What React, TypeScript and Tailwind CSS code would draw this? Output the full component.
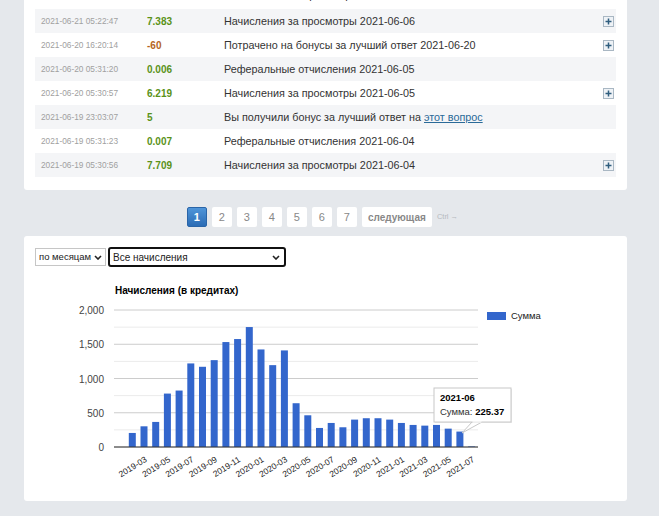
import React from "react";

type Row = {
    date: string;
    amount: string;
    text: React.ReactNode;
    plus?: boolean;
};

const rows: Row[] = [
    { date: "2021-06-21 05:22:47", amount: "7.383", text: "Начисления за просмотры 2021-06-06", plus: true },
    { date: "2021-06-20 16:20:14", amount: "-60", text: "Потрачено на бонусы за лучший ответ 2021-06-20", plus: true },
    { date: "2021-06-20 05:31:20", amount: "0.006", text: "Реферальные отчисления 2021-06-05" },
    { date: "2021-06-20 05:30:57", amount: "6.219", text: "Начисления за просмотры 2021-06-05", plus: true },
    {
        date: "2021-06-19 23:03:07",
        amount: "5",
        text: (
            <>
                Вы получили бонус за лучший ответ на{" "}
                <a href="#" className="text-[#2a6a98] underline">этот вопрос</a>
            </>
        ),
    },
    { date: "2021-06-19 05:31:23", amount: "0.007", text: "Реферальные отчисления 2021-06-04" },
    { date: "2021-06-19 05:30:56", amount: "7.709", text: "Начисления за просмотры 2021-06-04", plus: true },
];

const values = [
    205, 302, 366, 780, 824, 1220, 1171, 1268, 1532, 1576, 1751, 1424, 1195, 1410, 639,
    463, 278, 351, 288, 400, 420, 420, 400, 351, 322, 312, 322, 268, 225.37, 8,
];

const yOf = (v: number) => 176 - (v * 137) / 2000;
const barX = (i: number) => 93.8 + 11.7 * i;

const monthLabel = (i: number) => {
    const m = 1 + i; // 2019-02 is index 0
    const year = 2019 + Math.floor(m / 12);
    const month = (m % 12) + 1;
    return `${year}-${String(month).padStart(2, "0")}`;
};

const PlusIcon = () => (
    <svg width="11" height="11" viewBox="0 0 11 11">
        <rect x="0.5" y="0.5" width="10" height="10" fill="#eef2f6" stroke="#a9b7c3" />
        <path d="M5.5 2.5 V8.5 M2.5 5.5 H8.5" stroke="#2f5d7e" strokeWidth="1.5" />
    </svg>
);

const Chevron = () => (
    <svg width="8" height="5" viewBox="0 0 8 5">
        <path d="M1 1 L4 4 L7 1" fill="none" stroke="#222" strokeWidth="1.6" />
    </svg>
);

const Chart = () => {
    const grid = Array.from({ length: 9 }, (_, k) => k * 250);
    return (
        <svg width="581" height="222" className="block">
            <text x="80" y="23" className="text-[10px] font-bold" fill="#000">
                Начисления (в кредитах)
            </text>
            {grid.map((v, k) => (
                <line
                    key={v}
                    x1="79"
                    x2="443"
                    y1={yOf(v)}
                    y2={yOf(v)}
                    stroke={k % 2 === 0 ? "#cccccc" : "#ebebeb"}
                    strokeWidth="1"
                />
            ))}
            {[0, 500, 1000, 1500, 2000].map((v) => (
                <text key={v} x="69" y={yOf(v) + 4} textAnchor="end" className="text-[10px]" fill="#444">
                    {v.toLocaleString("en-US")}
                </text>
            ))}
            {values.map((v, i) => (
                <rect key={i} x={barX(i)} y={yOf(v)} width="7" height={176 - yOf(v)} fill="#3366cc" />
            ))}
            <line x1="79" x2="443" y1="176" y2="176" stroke="#333" strokeWidth="1" />
            {values.map((_, i) =>
                i % 2 === 1 ? (
                    <text
                        key={i}
                        transform={`translate(${barX(i) + 7}, 190) rotate(-32)`}
                        textAnchor="end"
                        className="text-[8.5px]"
                        fill="#222"
                    >
                        {monthLabel(i)}
                    </text>
                ) : null
            )}
            <rect x="452" y="41" width="19" height="8" fill="#3366cc" />
            <text x="476" y="48" className="text-[9.5px]" fill="#222">
                Сумма
            </text>
            <rect x="400" y="118" width="77" height="34" fill="#000" opacity="0.08" />
            <polygon points="437,151 447,151 427,162" fill="#fff" stroke="#c8c8c8" />
            <rect x="399" y="117" width="77" height="34" fill="#fff" stroke="#c8c8c8" />
            <line x1="437.5" x2="446.5" y1="151" y2="151" stroke="#fff" strokeWidth="1.2" />
            <text x="405" y="130" className="text-[9.5px] font-bold" fill="#000">
                2021-06
            </text>
            <text x="405" y="144" className="text-[9.5px]" fill="#333">
                Сумма: <tspan className="font-bold" fill="#000">225.37</tspan>
            </text>
        </svg>
    );
};

const App = () => {
    return (
        <div className="min-h-[516px] bg-[#e5e8ec] pb-4 font-['Liberation_Sans',Arial,sans-serif] overflow-hidden">
            <div className="ml-6 w-[603px] -mt-[31px] bg-white rounded-[3px] px-[11px] pt-[16px] pb-[13px]">
                <div className="flex items-center h-6 pb-[3px] text-[11px] text-[#333]">
                    <div className="w-[189px]"></div>
                    <div>Начисления за просмотры 2021-06-07</div>
                </div>
                {rows.map((row, index) => (
                    <div
                        key={index}
                        className={`flex items-center h-6 ${index % 2 === 0 ? "bg-[#f4f5f7]" : "bg-white"}`}
                    >
                        <div className="w-[112px] pl-[6px] text-[8.3px] text-[#a0a0a0] whitespace-nowrap">{row.date}</div>
                        <div
                            className={`w-[77px] text-[10px] font-bold ${row.amount.startsWith("-") ? "text-[#b5651d]" : "text-[#5a9218]"}`}
                        >
                            {row.amount}
                        </div>
                        <div className="flex-1 text-[10.8px] text-[#333]">{row.text}</div>
                        <div className="w-[11px] mr-[2px] flex">{row.plus && <PlusIcon />}</div>
                    </div>
                ))}
            </div>

            <div className="mt-[17px] mb-[9px] ml-6 w-[603px] flex items-center justify-center gap-[5px] pr-[6px]">
                <div className="w-5 h-5 flex items-center justify-center rounded-[2px] border border-[#2a65a8] bg-gradient-to-b from-[#4f95d9] to-[#2b6cb5] text-white text-[11px] font-bold">
                    1
                </div>
                {["2", "3", "4", "5", "6", "7"].map((p) => (
                    <div key={p} className="w-5 h-5 flex items-center justify-center rounded-[2px] bg-white text-[#888] text-[11px]">
                        {p}
                    </div>
                ))}
                <div className="w-[70px] h-5 flex items-center justify-center rounded-[2px] bg-white text-[#888] text-[10px] font-bold">
                    следующая
                </div>
                <div className="text-[7.5px] text-[#b5b9bf]">Ctrl →</div>
            </div>

            <div className="ml-6 w-[603px] bg-white rounded-[3px] pt-[11px] px-[11px] pb-[8px]">
                <div className="flex items-center gap-[2px] h-5">
                    <div className="w-[71px] h-[18px] border border-[#c6c6c6] bg-white flex items-center justify-between pl-[3px] pr-[3px] text-[9.5px] text-[#222] whitespace-nowrap">
                        <span>по месяцам</span>
                        <Chevron />
                    </div>
                    <div className="w-[178px] h-5 border-2 border-[#111] rounded-[3px] bg-white flex items-center justify-between pl-[3px] pr-[4px] text-[10px] text-[#222]">
                        <span>Все начисления</span>
                        <Chevron />
                    </div>
                </div>
                <div className="mt-[4px]">
                    <Chart />
                </div>
            </div>
        </div>
    );
};

export default App;
